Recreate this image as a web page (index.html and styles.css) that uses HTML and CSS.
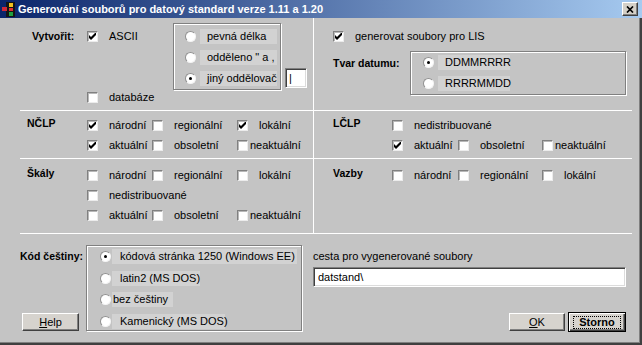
FILE: index.html
```html
<!DOCTYPE html>
<html lang="cs">
<head>
    <meta charset="UTF-8">
    <meta name="viewport" content="width=device-width, initial-scale=1.0">
    <title>Generování souborů pro datový standard</title>
    <link rel="stylesheet" href="styles.css">
</head>
<body>
<div class="window">
    <div class="titlebar">
        <svg class="app-icon" width="16" height="16" viewBox="0 0 16 16">
            <rect x="5" y="1" width="9" height="15" fill="#151515"/>
            <rect x="1" y="6" width="5" height="4" fill="#d02838"/>
            <rect x="8" y="2" width="4" height="4" fill="#f0c020"/>
            <rect x="8" y="7" width="4" height="3" fill="#e03030"/>
            <rect x="8" y="11" width="4" height="4" fill="#20a040"/>
        </svg>
        <span class="title">Generování souborů pro datový standard verze 1.11 a 1.20</span>
        <span class="close-btn">
            <svg width="8" height="7" viewBox="0 0 8 7"><path d="M1 0.5l6 6M7 0.5l-6 6" stroke="#000" stroke-width="1.7"/></svg>
        </span>
    </div>

    <div class="panel">
        <div class="row row-top">
            <div class="cell cell-left top-left">
                <div class="caption caption-create">Vytvořit:</div>
                <div class="create-checks">
                    <div class="chk"><span class="cb"><svg viewBox="0 0 7 7"><path d="M0 2l2 2 5-5v3l-5 5-2-2z"/></svg></span><span class="txt">ASCII</span></div>
                    <div class="chk"><span class="cb"></span><span class="txt">databáze</span></div>
                </div>
                <div class="groupbox group-sep">
                    <div class="opt"><span class="rb"></span><span class="opt-label lbl-sep">pevná délka</span></div>
                    <div class="opt"><span class="rb"></span><span class="opt-label lbl-sep">odděleno " a ,</span></div>
                    <div class="opt"><span class="rb on"></span><span class="opt-label lbl-sep">jiný oddělovač</span></div>
                </div>
                <input class="field field-sep" type="text" value="|">
            </div>
            <div class="cell cell-right top-right">
                <div class="chk chk-lis"><span class="cb"><svg viewBox="0 0 7 7"><path d="M0 2l2 2 5-5v3l-5 5-2-2z"/></svg></span><span class="txt">generovat soubory pro LIS</span></div>
                <div class="date-row">
                    <div class="caption caption-date">Tvar datumu:</div>
                    <div class="groupbox group-date">
                        <div class="opt"><span class="rb on"></span><span class="opt-label lbl-date">DDMMRRRR</span></div>
                        <div class="opt"><span class="rb"></span><span class="opt-label lbl-date">RRRRMMDD</span></div>
                    </div>
                </div>
            </div>
        </div>

        <div class="row row-nclp">
            <div class="cell cell-left checks-grid">
                <div class="caption">NČLP</div>
                <div class="chk"><span class="cb"><svg viewBox="0 0 7 7"><path d="M0 2l2 2 5-5v3l-5 5-2-2z"/></svg></span><span class="txt">národní</span></div>
                <div class="chk"><span class="cb"></span><span class="txt">regionální</span></div>
                <div class="chk"><span class="cb"><svg viewBox="0 0 7 7"><path d="M0 2l2 2 5-5v3l-5 5-2-2z"/></svg></span><span class="txt">lokální</span></div>
                <div class="chk first"><span class="cb"><svg viewBox="0 0 7 7"><path d="M0 2l2 2 5-5v3l-5 5-2-2z"/></svg></span><span class="txt">aktuální</span></div>
                <div class="chk"><span class="cb"></span><span class="txt">obsoletní</span></div>
                <div class="chk"><span class="cb"></span><span class="txt tight">neaktuální</span></div>
            </div>
            <div class="cell cell-right checks-grid">
                <div class="caption">LČLP</div>
                <div class="chk wide"><span class="cb"></span><span class="txt">nedistribuované</span></div>
                <div class="chk first"><span class="cb"><svg viewBox="0 0 7 7"><path d="M0 2l2 2 5-5v3l-5 5-2-2z"/></svg></span><span class="txt">aktuální</span></div>
                <div class="chk"><span class="cb"></span><span class="txt">obsoletní</span></div>
                <div class="chk"><span class="cb"></span><span class="txt tight">neaktuální</span></div>
            </div>
        </div>

        <div class="row row-skaly">
            <div class="cell cell-left checks-grid">
                <div class="caption">Škály</div>
                <div class="chk"><span class="cb"></span><span class="txt">národní</span></div>
                <div class="chk"><span class="cb"></span><span class="txt">regionální</span></div>
                <div class="chk"><span class="cb"></span><span class="txt">lokální</span></div>
                <div class="chk first wide"><span class="cb"></span><span class="txt">nedistribuované</span></div>
                <div class="chk first"><span class="cb"></span><span class="txt">aktuální</span></div>
                <div class="chk"><span class="cb"></span><span class="txt">obsoletní</span></div>
                <div class="chk"><span class="cb"></span><span class="txt tight">neaktuální</span></div>
            </div>
            <div class="cell cell-right checks-grid">
                <div class="caption">Vazby</div>
                <div class="chk"><span class="cb"></span><span class="txt">národní</span></div>
                <div class="chk"><span class="cb"></span><span class="txt">regionální</span></div>
                <div class="chk"><span class="cb"></span><span class="txt">lokální</span></div>
            </div>
        </div>
    </div>

    <div class="bottom">
        <div class="bottom-left">
            <div class="caption caption-code">Kód češtiny:</div>
            <button class="btn btn-help"><u>H</u>elp</button>
        </div>
        <div class="groupbox group-code">
            <div class="opt"><span class="rb on"></span><span class="opt-label lbl-1250">kódová stránka 1250 (Windows EE)</span></div>
            <div class="opt"><span class="rb"></span><span class="opt-label lbl-latin2">latin2 (MS DOS)</span></div>
            <div class="opt"><span class="rb"></span><span class="opt-label lbl-none">bez češtiny</span></div>
            <div class="opt"><span class="rb"></span><span class="opt-label lbl-kam">Kamenický (MS DOS)</span></div>
        </div>
        <div class="bottom-right">
            <div class="path-label">cesta pro vygenerované soubory</div>
            <input class="field field-path" type="text" value="datstand\">
            <div class="buttons">
                <button class="btn btn-ok"><u>O</u>K</button>
                <button class="btn btn-storno"><span class="focus">Storno</span></button>
            </div>
        </div>
    </div>
</div>
</body>
</html>
```

FILE: styles.css
```css
* {
    box-sizing: border-box;
}

body {
    margin: 0;
    background: #c4c4c4;
    font-family: "Liberation Sans", Arial, sans-serif;
    font-size: 11px;
    color: #000;
}

.window {
    width: 642px;
    height: 345px;
    background: #c4c4c4;
    box-shadow: inset -2px -2px 0 #404040, inset -3px -3px 0 #808080;
    overflow: hidden;
}

/* title bar */
.titlebar {
    height: 18px;
    display: flex;
    align-items: center;
    padding: 0 4px 0 1px;
    background: linear-gradient(to right, #0a246a, #a6caf0);
}

.app-icon {
    flex: none;
    margin-right: 1px;
}

.title {
    flex: 1;
    color: #fff;
    font-weight: bold;
    font-size: 11px;
    white-space: nowrap;
}

.close-btn {
    width: 16px;
    height: 14px;
    display: flex;
    align-items: center;
    justify-content: center;
    background: #d4d0c8;
    border: 1px solid;
    border-color: #fff #404040 #404040 #fff;
    box-shadow: inset -1px -1px 0 #808080;
}

/* common controls */
.caption {
    font-weight: bold;
    font-size: 10.5px;
    line-height: 16px;
}

.chk {
    display: flex;
    align-items: center;
    height: 20px;
    white-space: nowrap;
}

.cb {
    flex: none;
    width: 11px;
    height: 11px;
    display: flex;
    align-items: center;
    justify-content: center;
    background: #fff;
    border: 1px solid;
    border-color: #808080 #ececec #ececec #808080;
    box-shadow: inset 1px 1px 0 #b8b8b8;
}

.cb svg {
    width: 7px;
    height: 7px;
    fill: #000;
}

.txt {
    margin-left: 11px;
}

.txt.tight {
    margin-left: 2px;
}

.rb {
    flex: none;
    position: relative;
    width: 11px;
    height: 11px;
    border-radius: 50%;
    background: #fff;
    border: 1px solid;
    border-color: #909090 #f4f4f4 #f4f4f4 #909090;
}

.rb.on::after {
    content: "";
    position: absolute;
    left: 3px;
    top: 3px;
    width: 3px;
    height: 3px;
    border-radius: 50%;
    background: #000;
}

.opt {
    display: flex;
    align-items: center;
    height: 21px;
}

.opt-label {
    height: 15px;
    line-height: 15px;
    margin-left: 4px;
    padding-left: 7px;
    background: #d2d2d2;
    white-space: nowrap;
}

.groupbox {
    border: 1px solid #808080;
    box-shadow: inset 1px 1px 0 #fff, 1px 1px 0 #fff;
}

.field {
    font-family: "Liberation Sans", Arial, sans-serif;
    font-size: 11px;
    background: #fff;
    border: 1px solid;
    border-color: #808080 #fff #fff #808080;
    box-shadow: inset 1px 1px 0 #404040, inset -1px -1px 0 #dcdcdc;
    padding: 0 4px;
    outline: none;
}

.btn {
    font-family: "Liberation Sans", Arial, sans-serif;
    font-size: 11px;
    color: #000;
    padding: 0;
    background: #d6d3ce;
    border: 1px solid;
    border-color: #fff #404040 #404040 #fff;
    box-shadow: inset -1px -1px 0 #808080;
}

/* dialog body */
.panel {
    margin-left: 20px;
    width: 612px;
}

.row {
    display: flex;
    border-bottom: 1px solid #fff;
}

.row-top {
    height: 93px;
}

.row-nclp {
    height: 48px;
}

.row-skaly {
    height: 75px;
}

.cell-left {
    width: 294px;
    border-right: 1px solid #fff;
}

.cell-right {
    flex: 1;
}

/* top row */
.top-left {
    display: flex;
    align-items: flex-start;
}

.caption-create {
    margin: 10px 0 0 12px;
    width: 55px;
}

.create-checks {
    width: 86px;
    height: 100%;
    display: flex;
    flex-direction: column;
    justify-content: space-between;
    padding: 8px 0 3px;
}

.group-sep {
    width: 108px;
    margin-top: 5px;
    padding: 2px 0 0 11px;
}

.lbl-sep {
    width: 77px;
}

.field-sep {
    width: 22px;
    height: 20px;
    margin: 50px 0 0 4px;
    padding: 0 3px;
}

.top-right {
    padding-left: 19px;
}

.chk-lis {
    margin-top: 8px;
}

.date-row {
    display: flex;
    margin-top: 5px;
}

.caption-date {
    width: 77px;
    margin-top: 4px;
}

.group-date {
    width: 216px;
    height: 44px;
    padding-left: 12px;
}

.lbl-date {
    width: 72px;
}

/* check grids */
.checks-grid {
    display: grid;
    grid-template-columns: 60px 65px 85px auto;
    grid-auto-rows: 20px;
    align-content: start;
    padding-left: 7px;
}

.cell-right.checks-grid {
    grid-template-columns: 59px 66px 84px auto;
    padding-left: 19px;
}

.row-nclp .checks-grid {
    padding-top: 4px;
}

.row-skaly .checks-grid {
    padding-top: 6px;
}

.checks-grid .caption {
    align-self: start;
}

.chk.first {
    grid-column: 2;
}

.chk.wide {
    grid-column: 2 / -1;
}

/* bottom part */
.bottom {
    display: flex;
    padding: 11px 0 0 20px;
}

.bottom-left {
    width: 66px;
    height: 86px;
    display: flex;
    flex-direction: column;
    justify-content: space-between;
    align-items: flex-start;
}

.caption-code {
    line-height: 22px;
}

.btn-help {
    width: 57px;
    height: 18px;
    margin-left: 2px;
}

.group-code {
    width: 216px;
    height: 86px;
    padding-left: 13px;
}

.group-code .opt {
    height: 21.5px;
}

.group-code .opt-label {
    margin-left: 1px;
    padding-left: 8px;
}

.lbl-1250 {
    width: 185px;
}

.lbl-latin2 {
    width: 88px;
}

.group-code .lbl-none {
    width: 61px;
    padding-left: 1px;
}

.lbl-kam {
    width: 113px;
}

.bottom-right {
    width: 313px;
    height: 87px;
    margin-left: 11px;
    display: flex;
    flex-direction: column;
}

.path-label {
    line-height: 22px;
}

.field-path {
    width: 100%;
    height: 20px;
}

.buttons {
    margin-top: auto;
    display: flex;
    justify-content: flex-end;
    align-items: center;
    gap: 3px;
}

.btn-ok {
    width: 56px;
    height: 18px;
}

.btn-storno {
    width: 58px;
    height: 20px;
    font-weight: bold;
    border: 1px solid #000;
    box-shadow: inset 1px 1px 0 #fff, inset -1px -1px 0 #404040, inset -2px -2px 0 #808080;
    display: flex;
    align-items: center;
    justify-content: center;
}

.focus {
    border: 1px dotted #000;
    padding: 0 5px;
    line-height: 11px;
}
```
